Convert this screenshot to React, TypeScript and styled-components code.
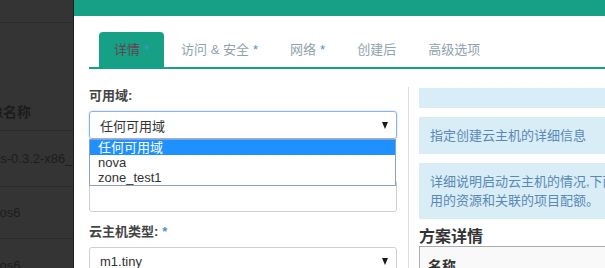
import React from 'react'
import styled, { createGlobalStyle } from 'styled-components'

const GlobalStyle = createGlobalStyle`
  html, body {
    margin: 0;
    padding: 0;
    overflow: hidden;
    background: #343434;
    font-family: "Liberation Sans", "Noto Sans CJK SC", sans-serif;
  }
`

const Page = styled.div`
  display: flex;
  width: 605px;
  height: 268px;
  overflow: hidden;
`

const Backdrop = styled.div`
  width: 73px;
  flex-shrink: 0;
  background: #343434;
  overflow: hidden;
  display: flex;
  flex-direction: column;
`

const BgRow = styled.div<{ $h: number; $bold?: boolean; $end?: boolean }>`
  height: ${(p) => p.$h}px;
  flex-shrink: 0;
  box-sizing: border-box;
  border-bottom: 1px solid #2a2a2a;
  display: flex;
  align-items: ${(p) => (p.$end ? 'flex-end' : 'center')};
  padding-bottom: ${(p) => (p.$end ? '9px' : '0')};
  margin-left: -25px;
  white-space: nowrap;
  color: #1c1c1c;
  font-size: ${(p) => (p.$bold ? '14px' : '13px')};
  font-weight: ${(p) => (p.$bold ? 700 : 400)};
`

const Modal = styled.div`
  flex: 1;
  min-width: 0;
  background: #fff;
  border-left: 1px solid #1e1e1e;
  overflow: hidden;
`

const Header = styled.div`
  height: 16px;
  background: #16a085;
  display: flex;
  align-items: flex-end;
  overflow: hidden;
  padding-left: 14px;
`

const Title = styled.div`
  font-size: 18px;
  line-height: 18px;
  margin-bottom: 15px;
  color: #333;
  white-space: nowrap;
`

const Body = styled.div`
  padding: 16px 0 0 15px;
`

const Tabs = styled.div`
  display: flex;
  height: 35px;
  border-bottom: 2px solid #16a085;
  padding-left: 10px;
`

const Tab = styled.div<{ $active?: boolean }>`
  padding: 0 15px;
  margin-right: 2px;
  line-height: 35px;
  font-size: 13px;
  white-space: nowrap;
  color: ${(p) => (p.$active ? '#6a3f50' : '#8fa3ac')};
  background: ${(p) => (p.$active ? '#16a085' : 'transparent')};
  border-radius: 4px 4px 0 0;
`

const Star = styled.span`
  color: #4a93d1;
  margin-left: 4px;
`

const Content = styled.div`
  display: flex;
  margin-top: 18px;
`

const LeftCol = styled.div`
  width: 308px;
  flex-shrink: 0;
  padding-right: 11px;
  border-right: 1px solid #dedede;
  height: 200px;
`

const Group = styled.div<{ $gap?: number }>`
  position: relative;
  margin-bottom: ${(p) => p.$gap ?? 18}px;
`

const Label = styled.div<{ $hidden?: boolean }>`
  font-size: 13px;
  font-weight: 700;
  line-height: 16px;
  color: #444;
  margin: 1px 0 7px;
  visibility: ${(p) => (p.$hidden ? 'hidden' : 'visible')};
`

const Select = styled.div<{ $focus?: boolean }>`
  position: relative;
  box-sizing: border-box;
  height: 28px;
  border: 1px solid ${(p) => (p.$focus ? '#8fb3e8' : '#cfcfcf')};
  box-shadow: ${(p) => (p.$focus ? '0 0 2px rgba(102,175,233,0.6)' : 'none')};
  border-radius: 3px;
  display: flex;
  align-items: center;
  justify-content: space-between;
  padding: 0 8px 0 10px;
  font-size: 13px;
  color: #333;
`

const Caret = styled.span`
  width: 0;
  height: 0;
  border-left: 3.5px solid transparent;
  border-right: 3.5px solid transparent;
  border-top: 7px solid #1a1a1a;
`

const Input = styled.div`
  box-sizing: border-box;
  height: 32px;
  border: 1px solid #cfcfcf;
  border-radius: 3px;
`

const Options = styled.ul`
  position: absolute;
  top: 100%;
  left: 0;
  right: 1px;
  margin: 0;
  padding: 0;
  list-style: none;
  background: #fff;
  border: 1px solid #8ea3b9;
  z-index: 5;
`

const Option = styled.li<{ $selected?: boolean }>`
  padding: 0 8px;
  font-size: 13px;
  line-height: 15px;
  color: ${(p) => (p.$selected ? '#fff' : '#333')};
  background: ${(p) => (p.$selected ? '#1e90ff' : '#fff')};
`

const RightCol = styled.div`
  width: 400px;
  flex-shrink: 0;
  padding-left: 10px;
`

const Info = styled.div<{ $h?: number }>`
  background: #d9edf7;
  color: #5a88b6;
  font-size: 13px;
  line-height: 19px;
  padding: ${(p) => (p.$h ? '0' : '9px 11px')};
  height: ${(p) => (p.$h ? `${p.$h}px` : 'auto')};
  margin: 1px 0 9px;
  white-space: nowrap;
`

const H3 = styled.div`
  font-size: 16px;
  font-weight: 700;
  line-height: 18px;
  color: #333;
  margin: 9px 0 0;
`

const Table = styled.div`
  border: 1px solid #ababab;
  background: #f9f9f9;
  height: 40px;
  display: flex;
  justify-content: space-between;
`

const Th = styled.div<{ $color?: string }>`
  font-size: 14px;
  font-weight: 700;
  padding: 8px 8px;
  color: ${(p) => p.$color || '#333'};
`

export default function App() {
  return (
    <>
      <GlobalStyle />
      <Page>
        <Backdrop>
          <BgRow $h={23} />
          <BgRow $h={108} $bold $end>
            镜像名称
          </BgRow>
          <BgRow $h={56}>cirros-0.3.2-x86_64</BgRow>
          <BgRow $h={52}>centos6</BgRow>
          <BgRow $h={54}>centos6</BgRow>
        </Backdrop>

        <Modal>
          <Header>
            <Title>启动云主机</Title>
          </Header>
          <Body>
            <Tabs>
              <Tab $active>
                详情<Star>*</Star>
              </Tab>
              <Tab>
                访问 &amp; 安全<Star>*</Star>
              </Tab>
              <Tab>
                网络<Star>*</Star>
              </Tab>
              <Tab>创建后</Tab>
              <Tab>高级选项</Tab>
            </Tabs>

            <Content>
              <LeftCol>
                <Group>
                  <Label>可用域:</Label>
                  <Select $focus>
                    <span>任何可用域</span>
                    <Caret />
                  </Select>
                  <Options>
                    <Option $selected>任何可用域</Option>
                    <Option>nova</Option>
                    <Option>zone_test1</Option>
                  </Options>
                </Group>

                <Group $gap={12}>
                  <Label $hidden>云主机名称:</Label>
                  <Input />
                </Group>

                <Group>
                  <Label>
                    云主机类型:<Star>*</Star>
                  </Label>
                  <Select>
                    <span>m1.tiny</span>
                    <Caret />
                  </Select>
                </Group>
              </LeftCol>

              <RightCol>
                <Info $h={20} />
                <Info>指定创建云主机的详细信息</Info>
                <Info>
                  详细说明启动云主机的情况,下面的图表显示此项目所
                  <br />
                  用的资源和关联的项目配额。
                </Info>
                <H3>方案详情</H3>
                <Table>
                  <Th>名称</Th>
                  <Th $color="#b8651a">值</Th>
                </Table>
              </RightCol>
            </Content>
          </Body>
        </Modal>
      </Page>
    </>
  )
}
